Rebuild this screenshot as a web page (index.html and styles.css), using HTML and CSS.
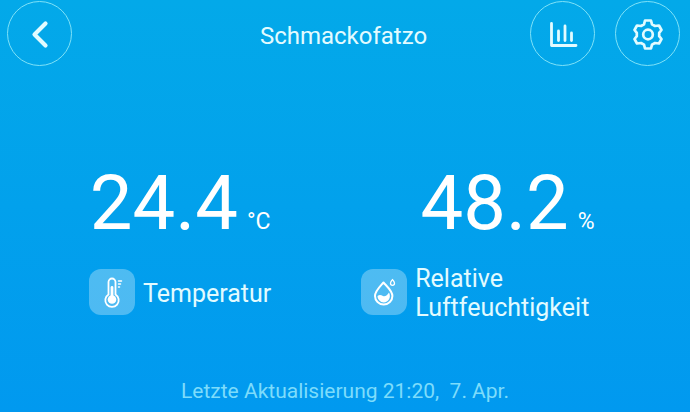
FILE: index.html
```html
<!DOCTYPE html>
<html lang="de">
  <head>
    <meta charset="UTF-8" />
    <meta name="viewport" content="width=device-width, initial-scale=1.0" />
    <title>Schmackofatzo</title>
    <link rel="stylesheet" href="styles.css">
  </head>
  <body>
    <header class="header">
      <button class="round-btn" aria-label="Zurück">
        <svg viewBox="0 0 32 32" fill="none" stroke="currentColor" stroke-width="4.200" stroke-linecap="round" stroke-linejoin="round">
          <path d="M21.500 5.500 10.500 16.500 21.500 27.500" />
        </svg>
      </button>
      <h1 class="header__title">Schmackofatzo</h1>
      <div class="header__actions">
        <button class="round-btn" aria-label="Verlauf">
          <svg viewBox="0 0 32 32" fill="none" stroke="currentColor" stroke-width="2.800" stroke-linecap="round" stroke-linejoin="round">
            <path d="M4.500 5.500V27.500H29M11.500 13V22.500M18 8V22.500M24.500 15V22.500" />
          </svg>
        </button>
        <button class="round-btn" aria-label="Einstellungen">
          <svg viewBox="0 0 32 32" fill="none" stroke="currentColor" stroke-width="2.700" stroke-linejoin="round">
            <path d="M13 2.500H19L20 6.300 23 8 27 7.500 29.500 12 27.200 14.800V18.200L29.500 21 27 25.500 23 25 20 26.700 19 30.500H13L12 26.700 9 25 5 25.500 2.500 21 4.800 18.200V14.800L2.500 12 5 7.500 9 8 12 6.300Z" />
            <circle cx="16" cy="16.500" r="4.800" />
          </svg>
        </button>
      </div>
    </header>
    <main class="readings">
      <section class="reading">
        <p class="reading__value">24.4 <span class="reading__unit">°C</span></p>
        <div class="reading__label">
          <span class="reading__icon">
            <svg viewBox="0 0 46 46" fill="none" stroke="currentColor" stroke-width="1.800" stroke-linecap="round">
              <path d="M19.500 25.500V13a3.500 3.500 0 0 1 7 0V25.500a6.700 6.700 0 1 1-7 0Z" />
              <path d="M23 18.500V29" stroke-width="2.800" />
              <circle cx="23" cy="30.500" r="4.300" fill="currentColor" stroke="none" />
              <path d="M29.500 12H32.500M29.500 15H31.500M29.500 18H30.500" stroke-width="1.500" />
            </svg>
          </span>
          <h2 class="reading__name">Temperatur</h2>
        </div>
      </section>
      <section class="reading reading--wide">
        <p class="reading__value">48.2 <span class="reading__unit">%</span></p>
        <div class="reading__label">
          <span class="reading__icon">
            <svg viewBox="0 0 46 46" fill="none" stroke="currentColor" stroke-width="2" stroke-linejoin="round">
              <path d="M22.500 13.500C19.500 17 14 22 14 27a8.700 8.500 0 0 0 17.400 0C31.400 22 25.500 17 22.500 13.500Z" />
              <path d="M16.500 27c2-1.500 3.500-1 5.500 0s4.500-1 6-3.500c2.500 5-.5 9.900-5.300 9.900C19.500 33.400 16.500 30.500 16.500 27Z" fill="currentColor" stroke="none" />
              <path d="M31.500 10.500c-1 1.500-2 2.500-2 3.800a2 2 0 0 0 4 0c0-1.300-1-2.300-2-3.800Z" stroke-width="1.300" />
            </svg>
          </span>
          <h2 class="reading__name">Relative Luftfeuchtigkeit</h2>
        </div>
      </section>
    </main>
    <footer class="footer">Letzte Aktualisierung 21:20,&nbsp; 7. Apr.</footer>
  </body>
</html>
```
FILE: styles.css
```css
*,
*::before,
*::after {
  box-sizing: border-box;
  padding: 0;
  margin: 0;
}

:root {
  --sky-top: #03a9e9;
  --sky-bottom: #0199ef;
  --text: #e2fbff;
  --ring: #7fe2f8;
  --muted: #7ddcfb;
}
body {
  display: flex;
  flex-direction: column;
  min-height: 100vh;
  background: linear-gradient(var(--sky-top), var(--sky-bottom));
  color: var(--text);
  font-family: Roboto, sans-serif;
}
h1,
h2 {
  font-weight: normal;
}
.header {
  display: grid;
  grid-template-columns: 1fr auto 1fr;
  align-items: center;
  padding: 1px 10px 0 7px;
}
.header__title {
  font-size: 24px;
  line-height: 28px;
  padding-top: 4px;
}
.header__actions {
  display: flex;
  justify-content: flex-end;
  gap: 20px;
}
.round-btn {
  display: flex;
  align-items: center;
  justify-content: center;
  width: 65px;
  height: 65px;
  border: 1px solid var(--ring);
  border-radius: 50%;
  background: none;
  color: var(--text);
  cursor: pointer;
}
.round-btn svg {
  width: 32px;
  height: 32px;
}
.readings {
  display: flex;
  gap: 90px;
  padding: 91px 36px 0 89px;
}
.reading--wide {
  flex: 1;
}
.reading__value {
  display: flex;
  align-items: baseline;
  justify-content: center;
  gap: 9px;
  color: #fff;
  font-size: 76px;
  line-height: 92px;
}
.reading__unit {
  font-size: 23px;
  line-height: 28px;
}
.reading__label {
  display: flex;
  align-items: center;
  gap: 8px;
  min-height: 60px;
  margin-top: 13px;
}
.reading__icon {
  flex: none;
  width: 46px;
  height: 46px;
  border-radius: 12px;
  background: rgba(255, 255, 255, 0.3);
  color: #fff;
}
.reading__icon svg {
  display: block;
}
.reading__name {
  max-width: 200px;
  padding-top: 2px;
  font-size: 25px;
  line-height: 29px;
}
.footer {
  margin-top: auto;
  padding-bottom: 8px;
  color: var(--muted);
  font-size: 21px;
  line-height: 26px;
  text-align: center;
}
```
